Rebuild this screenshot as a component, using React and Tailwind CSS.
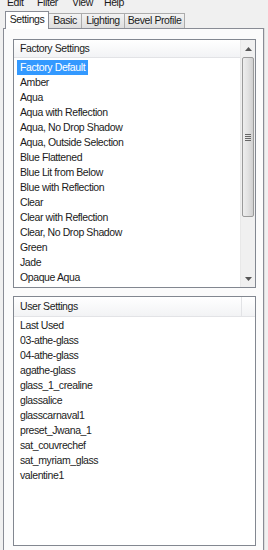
import React from "react";

const factory = [
  "Factory Default",
  "Amber",
  "Aqua",
  "Aqua with Reflection",
  "Aqua, No Drop Shadow",
  "Aqua, Outside Selection",
  "Blue Flattened",
  "Blue Lit from Below",
  "Blue with Reflection",
  "Clear",
  "Clear with Reflection",
  "Clear, No Drop Shadow",
  "Green",
  "Jade",
  "Opaque Aqua",
];

const user = [
  "Last Used",
  "03-athe-glass",
  "04-athe-glass",
  "agathe-glass",
  "glass_1_crealine",
  "glassalice",
  "glasscarnaval1",
  "preset_Jwana_1",
  "sat_couvrechef",
  "sat_myriam_glass",
  "valentine1",
];

function Arrow({ up }) {
  return (
    <svg width="7" height="4" viewBox="0 0 7 4">
      {up ? (
        <path d="M0 4 L3.5 0 L7 4 Z" fill="#555" />
      ) : (
        <path d="M0 0 L3.5 4 L7 0 Z" fill="#555" />
      )}
    </svg>
  );
}

export default function App() {
  return (
    <div
      className="w-[268px] h-[550px] overflow-hidden bg-[#f0f0f0] text-[10.5px] tracking-[-0.4px] text-[#1b1b1b]"
      style={{ fontFamily: '"Liberation Sans", Arial, sans-serif' }}
    >
      {/* menu bar */}
      <div className="h-[11px] overflow-hidden flex pl-[7px] leading-[12px]">
        <span className="-mt-[4px] w-[30px]">Edit</span>
        <span className="-mt-[4px] w-[35px]">Filter</span>
        <span className="-mt-[4px] w-[32px]">View</span>
        <span className="-mt-[4px]">Help</span>
      </div>
      {/* tabs */}
      <div className="h-[17px] flex items-end pl-[5px] relative z-10 whitespace-nowrap">
        <div className="h-[18px] w-[44px] bg-white border border-b-0 border-[#898c95] flex items-center justify-center pb-[1px] -mb-[1px]">
          Settings
        </div>
        <div className="h-[15px] w-[33px] bg-gradient-to-b from-[#f3f3f3] to-[#dedede] border border-l-0 border-b-0 border-[#acacac] flex items-center justify-center">
          Basic
        </div>
        <div className="h-[15px] w-[43px] bg-gradient-to-b from-[#f3f3f3] to-[#dedede] border border-l-0 border-b-0 border-[#acacac] flex items-center justify-center">
          Lighting
        </div>
        <div className="h-[15px] w-[60px] bg-gradient-to-b from-[#f3f3f3] to-[#dedede] border border-l-0 border-b-0 border-[#acacac] flex items-center justify-center">
          Bevel Profile
        </div>
      </div>
      {/* panel */}
      <div className="ml-[3px] w-[261px] h-[530px] border border-[#898c95] bg-[#fbfbfb] pt-[10px] pl-[9px] flex flex-col gap-[8px] shadow-[1px_0_0_#dcdcdc]">
        {/* Factory settings */}
        <div className="w-[243px] h-[249px] border border-[#828790] bg-white flex">
          <div className="flex-1 flex flex-col">
            <div className="h-[18px] bg-gradient-to-b from-[#ffffff] to-[#f2f3f5] border-b border-[#e2e3e6] flex items-center pl-[6px]">
              Factory Settings
            </div>
            <div className="pt-[2px] pl-[3px] flex flex-col items-start">
              {factory.map((f, i) => (
                <div
                  key={f}
                  className={
                    "h-[15px] leading-[15px] px-[3px] whitespace-nowrap " +
                    (i === 0 ? "bg-[#3399ff] text-white" : "")
                  }
                >
                  {f}
                </div>
              ))}
            </div>
          </div>
          {/* scrollbar */}
          <div className="w-[15px] bg-[#f0f0f0] border-l border-[#e8e8e8] flex flex-col">
            <div className="h-[17px] flex items-center justify-center">
              <Arrow up />
            </div>
            <div className="h-[160px] mx-[1px] rounded-[2px] border border-[#9a9a9a] bg-gradient-to-r from-[#eeeeee] via-[#e2e2e2] to-[#d0d0d0] flex items-center justify-center">
              <div className="flex flex-col gap-[1px]">
                <div className="w-[6px] h-[1px] bg-[#666]" />
                <div className="w-[6px] h-[1px] bg-[#666]" />
                <div className="w-[6px] h-[1px] bg-[#666]" />
                <div className="w-[6px] h-[1px] bg-[#666]" />
              </div>
            </div>
            <div className="flex-1" />
            <div className="h-[17px] flex items-center justify-center">
              <Arrow />
            </div>
          </div>
        </div>
        {/* User settings */}
        <div className="w-[243px] h-[250px] border border-[#828790] bg-white flex flex-col">
          <div className="h-[20px] bg-gradient-to-b from-[#ffffff] to-[#f2f3f5] border-b border-[#e2e3e6] flex">
            <div className="flex-1 flex items-center pl-[6px]">User Settings</div>
            <div className="w-[14px] border-l border-[#e2e3e6]" />
          </div>
          <div className="pt-[1px] pl-[6px] flex flex-col">
            {user.map((u) => (
              <div key={u} className="h-[15px] leading-[15px] whitespace-nowrap">
                {u}
              </div>
            ))}
          </div>
        </div>
      </div>
    </div>
  );
}
